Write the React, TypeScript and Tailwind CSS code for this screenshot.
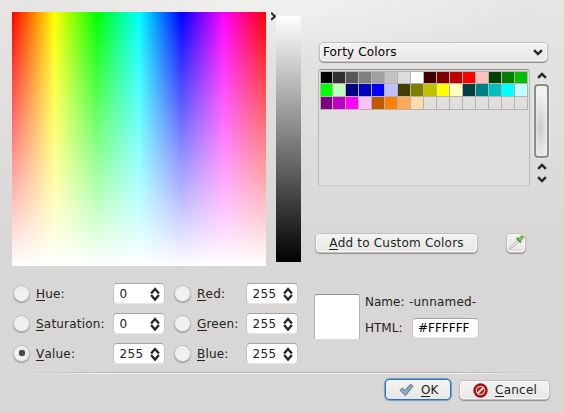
import type { ReactNode } from 'react';

const swatches = [
  '#000000', '#303030', '#585858', '#808080', '#a0a0a0', '#c3c3c3', '#dcdcdc', '#ffffff',
  '#400000', '#800000', '#c00000', '#ff0000', '#ffc0c0', '#004000', '#008000', '#00c000',
  '#00ff00', '#c0ffc0', '#000080', '#0000c0', '#0000ff', '#c0c0ff', '#404000', '#808000',
  '#c0c000', '#ffff00', '#ffffc0', '#004040', '#008080', '#00c0c0', '#00ffff', '#c0ffff',
  '#800080', '#c000c0', '#ff00ff', '#ffc0ff', '#c05800', '#ff8000', '#ffa858', '#ffdca8',
  '', '', '', '', '', '', '', '',
];

const raised =
  'rounded-[4px] bg-linear-to-b from-[#f3f3f2] to-[#e8e7e5] shadow-[0_0_0_1px_#c2c1bf,0_1px_1px_1px_#908f8d,inset_0_0_0_1px_#f6f6f5]';
const sunken =
  'rounded-[3px] bg-white shadow-[0_-1px_0_0_#a6a5a3,-1px_0_0_0_#c6c5c3,1px_0_0_0_#c9c8c6,0_1px_0_0_#e7e6e5]';

function Chevron({ dir, className = '' }: { dir: 'up' | 'down'; className?: string }) {
  return (
    <svg width="10" height="7" viewBox="0 0 10 7" className={className} fill="none" stroke="#262626" strokeWidth="2.4">
      <path d={dir === 'up' ? 'M1.1 5.8 5 1.9 8.9 5.8' : 'M1.1 1.2 5 5.1 8.9 1.2'} />
    </svg>
  );
}

function Mnemonic({ children }: { children: ReactNode }) {
  return <span className="inline-block h-[14px] border-b border-[#222] leading-[14px]">{children}</span>;
}

function Radio({ checked = false }: { checked?: boolean }) {
  return (
    <span className="flex size-[15px] shrink-0 items-center justify-center rounded-full bg-linear-to-b from-[#eeedec] to-[#f2f2f1] shadow-[0_0_0_1px_#c4c3c1,0_1px_1px_1px_#989795]">
      {checked && <span className="size-[6px] rounded-full bg-[#4a4946] shadow-[0_0_1px_#4a4946]" />}
    </span>
  );
}

function Channel({ label, value, width, checked }: { label: string; value: string; width: string; checked?: boolean }) {
  return (
    <div className="flex h-[30px] items-center">
      <Radio checked={checked} />
      <span className={`ml-[7px] shrink-0 whitespace-nowrap pt-[2px] tracking-[0.2px] ${width}`}>
        <Mnemonic>{label[0]}</Mnemonic>
        {label.slice(1)}
      </span>
      <span className={`mt-px flex h-[19px] w-[50px] items-center justify-between pl-[5.5px] pr-[4px] ${sunken}`}>
        <span className="mt-px tracking-[0.35px]">{value}</span>
        <svg width="10" height="14" viewBox="0 0 10 14" fill="none" stroke="#262626" strokeWidth="2.3">
          <path d="M1.1 6.4 5 1.9 8.9 6.4M1.1 8.1 5 12.6 8.9 8.1" />
        </svg>
      </span>
    </div>
  );
}

export default function App() {
  return (
    <div className="flex h-[413px] w-[564px] flex-col overflow-hidden bg-[radial-gradient(ellipse_260px_60px_at_282px_0px,#f1f1f0,transparent),linear-gradient(to_bottom,#e6e5e4,#d8d7d5_245px)] font-['DejaVu_Sans',sans-serif] text-[12px] leading-[16px] text-[#232323]">
      <div className="flex h-[278px] pl-[12px] pt-[12px]">
        <div className="relative size-[254px] bg-[linear-gradient(to_bottom,transparent,white),linear-gradient(to_right,#f00,#ff0,#0f0,#0ff,#00f,#f0f,#f00)]">
          <span className="absolute -left-px bottom-[3px] h-px w-[4px] bg-white" />
          <span className="absolute -bottom-px left-[4px] h-[2px] w-px bg-white" />
        </div>
        <svg width="5" height="9" viewBox="0 0 5 9" className="ml-[5px]">
          <path d="M0 .8 4 4.3 0 7.8" fill="none" stroke="#333" strokeWidth="2.2" />
        </svg>
        <div className="mt-[4px] h-[246px] w-[25px] bg-[linear-gradient(to_bottom,#fff,#000)]" />

        <div className="ml-[15px] flex w-[236px] flex-col pt-[31px]">
          <div className={`ml-[4px] flex h-[18px] w-[227px] items-center justify-between pl-[3px] pr-[4px] ${raised}`}>
            <span className="tracking-[0.15px] text-black">Forty Colors</span>
            <Chevron dir="down" className="mt-px" />
          </div>
          <div className="mt-[8px] flex h-[117px]">
            <div className="ml-[2px] w-[212px] rounded-[3px] border border-[#b9b8b6] border-b-[#cccbc9] border-t-[#8f8e8c] bg-[#e0dfde] pl-px pt-px">
              <div className="grid w-[208px] grid-cols-[12px_repeat(15,13px)] grid-rows-[12px_13px_13px] border-l border-t border-[#b4b3b1]">
                {swatches.map((color, i) => (
                  <span key={i} className="border-b border-r border-[#b4b3b1] bg-clip-padding" style={{ backgroundColor: color || undefined }} />
                ))}
              </div>
            </div>
            <div className="ml-[4px] flex w-[15px] flex-col items-center pt-[3px]">
              <Chevron dir="up" />
              <span className="mt-[5px] h-[74px] w-[15px] shrink-0 rounded-[4px] border-2 border-[#8c8b89] bg-[radial-gradient(ellipse_8px_36px_at_40%_60%,#cbcbca,#f1f1f0)] shadow-[0_0_0_1px_#efeeed]" />
              <Chevron dir="up" className="mt-[5px] shrink-0" />
              <Chevron dir="down" className="mt-[6px] shrink-0" />
            </div>
          </div>
          <div className="mt-[48px] flex">
            <div className={`flex h-[18px] w-[161px] items-center justify-center ${raised}`}>
              <span className="whitespace-nowrap tracking-[0.2px]">
                <Mnemonic>A</Mnemonic>dd to Custom Colors
              </span>
            </div>
            <div className={`ml-[30px] flex size-[18px] items-center justify-center ${raised}`}>
              <svg width="18" height="18" viewBox="0 0 18 18">
                <path d="M4 16.2h11" stroke="#d2d2d0" />
                <path d="M1.8 15.6 3 13 10.2 6 11.9 7.7 4.8 14.6Z" fill="#dde2e2" stroke="#aab0b0" strokeWidth=".8" />
                <path d="M9.6 4 14 8.4" stroke="#527a45" strokeWidth="1.8" />
                <path d="m11 5 3-3q1.6-1 2.4 0t-.2 2.4l-3 3Z" fill="#7fbe60" stroke="#64a04b" strokeWidth=".7" />
              </svg>
            </div>
          </div>
        </div>
      </div>

      <div className="flex h-[94px] pl-[14px]">
        <div className="flex w-[161px] flex-col">
          <Channel label="Hue:" value="0" width="w-[78px]" />
          <Channel label="Saturation:" value="0" width="w-[78px]" />
          <Channel label="Value:" value="255" width="w-[78px]" checked />
        </div>
        <div className="flex w-[139px] flex-col">
          <Channel label="Red:" value="255" width="w-[50px]" />
          <Channel label="Green:" value="255" width="w-[50px]" />
          <Channel label="Blue:" value="255" width="w-[50px]" />
        </div>
        <div className="mt-[16px] h-[46px] w-[46px] rounded-[3px] border border-[#b4b3b1] border-b-[#dfdedd] border-t-[#918f8d] bg-white" />
        <div className="ml-[5px] flex flex-col pt-[16px]">
          <div className="flex h-[16px] items-center whitespace-nowrap">
            <span className="w-[44px]">Name:</span>
            <span className="tracking-[0.2px]">-unnamed-</span>
          </div>
          <div className="mt-[9px] flex h-[18px] items-center">
            <span className="w-[48px]">HTML:</span>
            <span className={`flex h-[18px] w-[65px] items-center pl-[5px] text-black ${sunken}`}>#FFFFFF</span>
          </div>
        </div>
      </div>

      <div className="mx-[12px] h-[2px] shrink-0 bg-[linear-gradient(to_bottom,#b5b4b2_50%,#f3f3f2_50%)] [mask-image:linear-gradient(to_right,transparent,black_20%,black_80%,transparent)]" />
      <div className="flex justify-end gap-[10px] pr-[15px] pt-[6px]">
        <div className="flex h-[19px] w-[64px] items-center rounded-[4px] bg-linear-to-b from-[#f3f3f2] to-[#e8e7e5] pl-[13px] shadow-[0_0_0_1px_#2f6fbc,0_0_1px_2px_#6f9bd0]">
          <svg width="15" height="14" viewBox="0 0 15 14">
            <path d="M1 7.4 3.4 5 6 7.4 11.5 1.2 14 3.2 6.4 12.6Z" fill="#8eabc5" stroke="#536f8b" strokeWidth="1" strokeLinejoin="round" />
          </svg>
          <span className="ml-[7px] mt-px whitespace-nowrap"><Mnemonic>O</Mnemonic>K</span>
        </div>
        <div className={`mt-px flex h-[18px] w-[89px] items-center pl-[13px] ${raised}`}>
          <svg width="15" height="15" viewBox="0 0 15 15">
            <circle cx="7.5" cy="7.5" r="6.9" fill="#a80f0c" stroke="#7f1715" strokeWidth=".5" />
            <circle cx="7.5" cy="7.5" r="4.2" fill="#b91b17" stroke="#e3bfbc" strokeWidth="1.2" />
            <path d="m4.6 10.4 5.8-5.8" stroke="#f2e5e4" strokeWidth="1.8" />
          </svg>
          <span className="ml-[7px] whitespace-nowrap tracking-[0.25px]"><Mnemonic>C</Mnemonic>ancel</span>
        </div>
      </div>
    </div>
  );
}
